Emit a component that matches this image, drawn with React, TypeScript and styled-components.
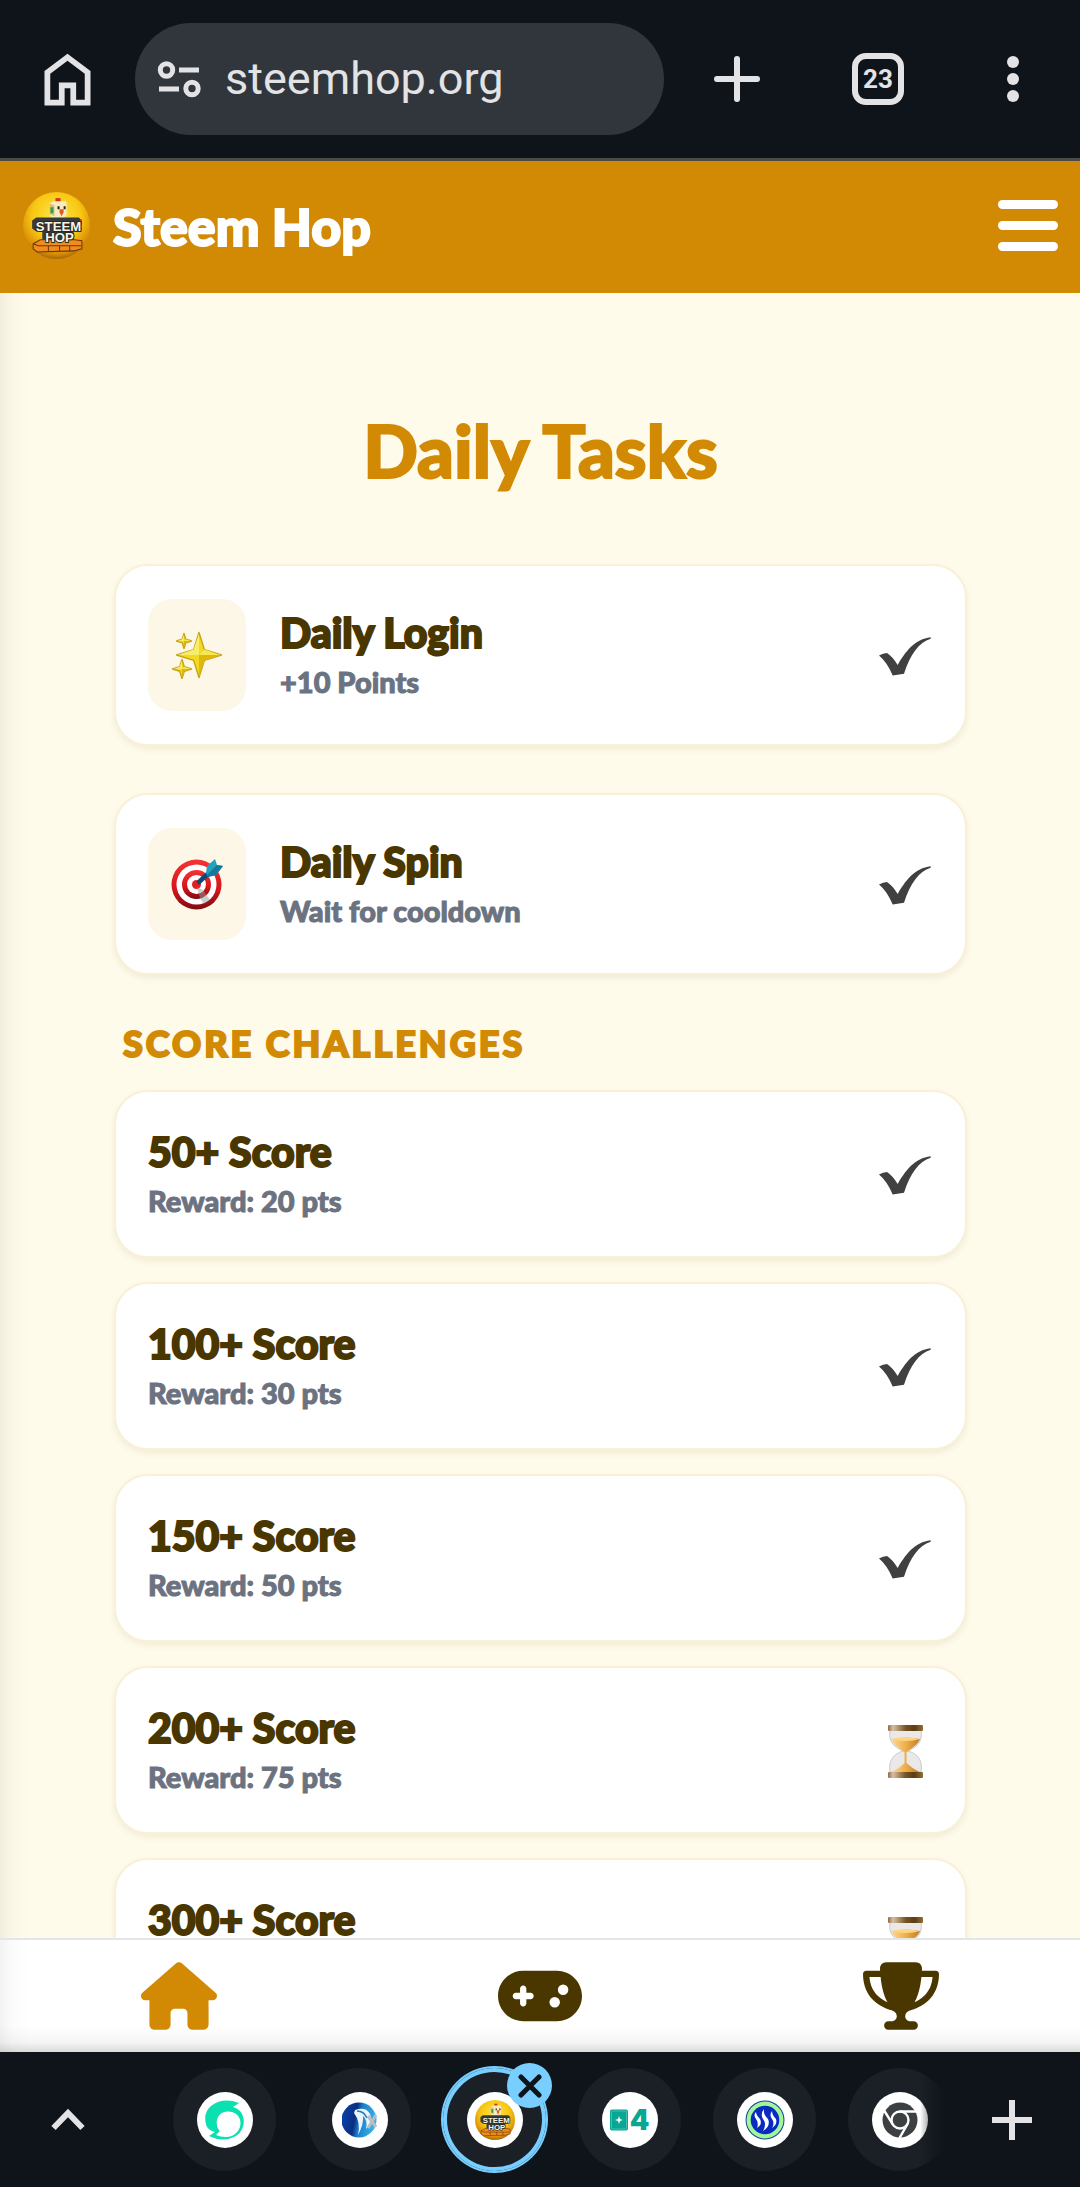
import React from "react";
import styled, { createGlobalStyle } from "styled-components";
import { FaHouse, FaGamepad, FaTrophy } from "react-icons/fa6";

const color = {
  chrome: "#0f141a",
  chromeIcon: "#e3e3e6",
  pill: "#30363c",
  gold: "#d28a04",
  brown: "#4a3700",
  cream: "#fffbea",
  grey: "#6b7280",
};

const GlobalStyle = createGlobalStyle`
  *, *::before, *::after { box-sizing: border-box; }
  body { margin: 0; background: ${color.chrome}; }
  button { border: 0; padding: 0; margin: 0; background: none; font: inherit; color: inherit; cursor: pointer; }
  a { color: inherit; text-decoration: none; }
  svg { display: block; flex: none; }
`;

const Screen = styled.div`
  display: flex;
  flex-direction: column;
  height: 100vh;
  font-family: Lato, "Open Sans", sans-serif;
  color: ${color.brown};
`;

/* Browser toolbar */

const Toolbar = styled.div`
  flex: none;
  display: flex;
  align-items: center;
  height: 161px;
  background: ${color.chrome};
  border-bottom: 3px solid #4b4a44;
  color: ${color.chromeIcon};
`;

const ToolButton = styled.button<{ $width: number }>`
  display: flex;
  align-items: center;
  justify-content: center;
  width: ${(p) => p.$width}px;
  height: 112px;
  flex: none;
`;

const AddressPill = styled.div`
  flex: 1;
  min-width: 0;
  display: flex;
  align-items: center;
  gap: 24px;
  height: 112px;
  padding: 0 22px;
  border-radius: 56px;
  background: ${color.pill};
`;

const AddressInput = styled.input`
  flex: 1;
  min-width: 0;
  border: 0;
  padding: 0;
  outline: 0;
  background: none;
  color: ${color.chromeIcon};
  font: 400 45px/60px Roboto, sans-serif;
`;

const TabCount = styled.span`
  display: flex;
  align-items: center;
  justify-content: center;
  width: 52px;
  height: 52px;
  border: 6px solid ${color.chromeIcon};
  border-radius: 14px;
  font: 700 26px/30px Roboto, sans-serif;
`;

/* Site header */

const Header = styled.header`
  flex: none;
  display: flex;
  align-items: center;
  justify-content: space-between;
  height: 132px;
  padding: 0 22px 3px 23px;
  background: ${color.gold};
  color: #fff;
`;

const Brand = styled.a`
  display: flex;
  align-items: center;
  gap: 23px;
  font-size: 52px;
  line-height: 60px;
  font-weight: 900;
  -webkit-text-stroke: 2px currentColor;

  svg {
    -webkit-text-stroke: 0;
  }
`;

const MenuButton = styled.button`
  display: flex;
  flex-direction: column;
  gap: 12px;
`;

const MenuBar = styled.span`
  width: 60px;
  height: 9px;
  border-radius: 5px;
  background: #fff;
`;

/* Task list */

const edgeShade = "linear-gradient(to right, rgba(0,0,0,0.05), rgba(0,0,0,0.015) 12px, transparent 30px)";

const Main = styled.main`
  flex: 1;
  min-height: 0;
  overflow-y: auto;
  scrollbar-width: none;
  padding: 111px 113px 0 114px;
  background: ${edgeShade}, ${color.cream};
`;

const PageTitle = styled.h1`
  margin: 0 0 68px;
  text-align: center;
  font-size: 72px;
  line-height: 92px;
  font-weight: 900;
  color: ${color.gold};
  -webkit-text-stroke: 2px currentColor;
`;

const TaskList = styled.ul<{ $gap: number }>`
  display: flex;
  flex-direction: column;
  gap: ${(p) => p.$gap}px;
  margin: 0;
  padding: 0;
  list-style: none;
`;

const TaskCard = styled.li`
  display: flex;
  align-items: center;
  gap: 34px;
  padding: 33px 34px 33px 32px;
  border: 2px solid #faf0d7;
  border-radius: 34px;
  background: #fff;
  box-shadow: 0 3px 6px rgba(80, 60, 0, 0.08);
`;

const TaskIcon = styled.div`
  flex: none;
  display: flex;
  align-items: center;
  justify-content: center;
  width: 98px;
  height: 112px;
  border-radius: 24px;
  background: #fdf7e7;
`;

const TaskText = styled.div`
  flex: 1;
  min-width: 0;
  min-height: 98px;
`;

const TaskTitle = styled.h3`
  margin: 0;
  font-size: 41px;
  line-height: 54px;
  font-weight: 900;
  -webkit-text-stroke: 2px currentColor;
`;

const TaskNote = styled.p`
  margin: 0;
  font-size: 29px;
  line-height: 44px;
  font-weight: 900;
  color: ${color.grey};
  -webkit-text-stroke: 1px currentColor;
`;

const SectionTitle = styled.h2`
  margin: 43px 0 22px;
  padding-left: 9px;
  font-size: 36px;
  line-height: 50px;
  font-weight: 900;
  letter-spacing: 3px;
  text-transform: uppercase;
  color: ${color.gold};
  -webkit-text-stroke: 2px currentColor;
`;

/* Site navigation */

const BottomNav = styled.nav`
  flex: none;
  display: flex;
  align-items: center;
  justify-content: space-around;
  height: 114px;
  padding-bottom: 1px;
  border-top: 2px solid #e5e5e8;
  background: linear-gradient(to top, rgba(0, 20, 0, 0.15), rgba(0, 0, 0, 0.04) 10px, transparent 26px), ${edgeShade}, #fff;
`;

const NavLink = styled.a<{ $width: number; $active?: boolean }>`
  display: flex;
  color: ${(p) => (p.$active ? color.gold : color.brown)};

  svg {
    height: 68px;
    width: ${(p) => p.$width}px;
  }
`;

/* Browser tab strip */

const TabStrip = styled.div`
  flex: none;
  display: flex;
  align-items: center;
  height: 135px;
  background: ${color.chrome};
  color: ${color.chromeIcon};
`;

const Tabs = styled.div`
  position: relative;
  flex: 1;
  min-width: 0;
  display: flex;
  align-items: center;
  gap: 32px;
  height: 135px;
  padding-left: 37px;
  overflow: hidden;

  &::after {
    content: "";
    position: absolute;
    inset: 0 0 0 auto;
    width: 24px;
    background: linear-gradient(to right, transparent, ${color.chrome});
  }
`;

const Tab = styled.div<{ $active?: boolean }>`
  position: relative;
  flex: none;
  display: flex;
  align-items: center;
  justify-content: center;
  width: 103px;
  height: 103px;
  border-radius: 50%;
  background: #1b1f26;
  box-shadow: ${(p) => (p.$active ? "inset 0 0 0 4px #77ceff, 0 0 0 2px #77ceff" : "none")};
`;

const Favicon = styled.button`
  display: flex;
  align-items: center;
  justify-content: center;
  width: 56px;
  height: 56px;
  border-radius: 50%;
  background: #fff;
`;

const CloseTab = styled.button`
  position: absolute;
  top: -5px;
  right: -6px;
  display: flex;
  align-items: center;
  justify-content: center;
  width: 45px;
  height: 45px;
  border-radius: 50%;
  background: #77ceff;
  color: ${color.chrome};
`;

/* Drawings */

const HomeOutline = () => (
  <svg width="69" height="69" viewBox="0 0 24 24" fill="currentColor">
    <path d="M6 19h3v-6h6v6h3v-9l-6-4.500L6 10v9Zm-2 2V9l8-6 8 6v12h-7v-6h-2v6H4Z" />
  </svg>
);

const SiteInfo = () => (
  <svg width="44" height="38" viewBox="0 0 44 38" fill="none" stroke="currentColor" strokeWidth="5">
    <circle cx="9.500" cy="10" r="6.200" />
    <path d="M22 10h20M2 29h20" />
    <circle cx="35" cy="28.500" r="6.200" />
  </svg>
);

const RoundPlus = () => (
  <svg width="46" height="46" viewBox="0 0 46 46" stroke="currentColor" strokeWidth="6" strokeLinecap="round">
    <path d="M23 3v40M3 23h40" />
  </svg>
);

const Dots = () => (
  <svg width="12" height="48" viewBox="0 0 12 48" fill="currentColor">
    <circle cx="6" cy="7" r="6" />
    <circle cx="6" cy="24" r="6" />
    <circle cx="6" cy="41" r="6" />
  </svg>
);

const GameLogo = ({ size, id }: { size: number; id: string }) => (
  <svg width={size} height={size} viewBox="0 0 66 66">
    <defs>
      <radialGradient id={id} cx="50%" cy="36%" r="66%">
        <stop offset="0" stopColor="#ffe648" />
        <stop offset="0.550" stopColor="#f8c713" />
        <stop offset="0.850" stopColor="#d98f08" />
        <stop offset="1" stopColor="#96600a" />
      </radialGradient>
    </defs>
    <circle cx="33" cy="33" r="33" fill={`url(#${id})`} />
    <path d="M32 6h5v5h-5z" fill="#d8321c" />
    <path d="M26 11l4-2h12l1 2v12l-3 2H28l-2-3z" fill="#f7ebc0" />
    <path d="M26 11l5 2v11l-5-2z" fill="#d9c27c" />
    <path d="M27 15h3v6h-3z" fill="#3f9a4c" />
    <path d="M34 14h2v3h-2zM40 14h2v3h-2z" fill="#222" />
    <path d="M36 17h4v3l-2 4-2-4z" fill="#e4581a" />
    <path d="M9 28l4-3h42l3 3v9l-4 2h-4v9H19v-9h-6l-4-3z" fill="#3b3a36" />
    <path d="M56 27h2v4h-2z" fill="#d33a22" />
    <path d="M56 32h2v4h-2z" fill="#4fae3b" />
    <path d="M10 51l7-4h34l7 1v8l-8 2-36 1-4-3z" fill="#f08c1c" stroke="#6b3606" strokeWidth="1" />
    <path d="M10 51l5 2h42M25 53v5M36 53v5M46 53v5" fill="none" stroke="#6b3606" strokeWidth="1" />
    <g
      fill="#f6f4ea"
      stroke="#2a2924"
      strokeWidth="2"
      strokeLinejoin="round"
      paintOrder="stroke"
      textAnchor="middle"
      fontFamily="'Liberation Sans', sans-serif"
      fontWeight="700"
    >
      <text x="35" y="38" fontSize="13">STEEM</text>
      <text x="36" y="49" fontSize="13">HOP</text>
    </g>
  </svg>
);

const Star = ({ x, y, r }: { x: number; y: number; r: number }) => {
  const k = r * 0.24;
  const points = [
    [0, -r], [k, -k], [r, 0], [k, k], [0, r], [-k, k], [-r, 0], [-k, -k],
  ];
  return (
    <g transform={`translate(${x} ${y})`} strokeLinejoin="round">
      <polygon points={points.map((p) => p.join(",")).join(" ")} fill="#f3d91f" stroke="#c9a21b" strokeWidth="1.400" />
      <path d={`M0 0L0 ${-r + 1}L${-k} ${-k}L${-r + 1} 0Z`} fill="#f8ec6c" />
      <path d={`M0 0L${k} ${-k}L${r - 1} 0Z`} fill="#f6e650" />
      <path d={`M0 0L0 ${r - 1}L${k} ${k}L${r - 1} 0Z`} fill="#dfb80c" />
    </g>
  );
};

const Sparkles = () => (
  <svg width="52" height="48" viewBox="0 0 52 48">
    <Star x={28} y={24} r={22.500} />
    <Star x={13} y={10} r={7.500} />
    <Star x={11} y={38} r={9.500} />
  </svg>
);

const Target = () => (
  <svg width="52" height="52" viewBox="0 0 52 52">
    <defs>
      <linearGradient id="target-red" x1="0" y1="0" x2="0" y2="1">
        <stop offset="0" stopColor="#f33434" />
        <stop offset="0.600" stopColor="#d5151a" />
        <stop offset="1" stopColor="#7c0c12" />
      </linearGradient>
    </defs>
    <circle cx="25.500" cy="26.500" r="25" fill="url(#target-red)" />
    <circle cx="25.500" cy="26.500" r="20" fill="#fff" />
    <circle cx="25.500" cy="26.500" r="14.500" fill="url(#target-red)" />
    <circle cx="25.500" cy="26.500" r="9.500" fill="#fff" />
    <circle cx="25.500" cy="26.500" r="4.500" fill="#e31f24" />
    <path d="M26 29l6 3 7 10-6 4-4-6z" fill="#9c9c9c" opacity="0.500" />
    <path d="M28 24L41 12" stroke="#0d4b77" strokeWidth="4.500" strokeLinecap="round" />
    <path d="M35 15l1-7 8-7 2 6 6 1-7 9-8 2z" fill="#22a3bd" />
    <path d="M36 17L46 7l6 1-7 9-8 2z" fill="#137a9c" />
  </svg>
);

const Check = () => (
  <svg width="52" height="44" viewBox="0 -4 52 44" role="img" aria-label="Done">
    <path
      d="M0 18.500Q4 16 8 16Q13 19 18.700 28C26 15 36 2 51.700 0.300V1.800C40 5 31 18 25 36.700L13.700 38.500Q8 25 0 18.500Z"
      fill="#404040"
    />
  </svg>
);

const Hourglass = ({ id }: { id: string }) => (
  <svg width="52" height="58" viewBox="-9 -3 52 58" role="img" aria-label="Pending">
    <defs>
      <linearGradient id={`${id}-wood`} x1="0" x2="1" y1="0" y2="0">
        <stop offset="0" stopColor="#8d6a48" />
        <stop offset="0.140" stopColor="#d8c0a4" />
        <stop offset="0.500" stopColor="#7a5524" />
        <stop offset="0.750" stopColor="#5b3d10" />
        <stop offset="1" stopColor="#8e6e38" />
      </linearGradient>
      <linearGradient id={`${id}-sand`} x1="0" x2="1" y1="0" y2="0">
        <stop offset="0" stopColor="#ffd994" />
        <stop offset="0.500" stopColor="#eeb04d" />
        <stop offset="1" stopColor="#c27f1f" />
      </linearGradient>
    </defs>
    <path
      d="M2 6h31C35 19 28 23 20 27C30 30 35 36 33 48H2C0 36 6 30 15 27C7 23 0 19 2 6Z"
      fill="#eae8e8"
      stroke="#cdcaca"
      strokeWidth="1"
    />
    <path d="M3 15q14-3 29 0C30 21 23 24 19 28H16C12 24 5 21 3 15Z" fill={`url(#${id}-sand)`} />
    <path d="M3 15q14-3 29 0q-14 4-29 0Z" fill="#ffd47e" />
    <path d="M16.500 27h2v12q5 5 13 9H3q9-4 13.500-9Z" fill={`url(#${id}-sand)`} />
    <rect x="0" y="1" width="35" height="6" rx="1" fill={`url(#${id}-wood)`} />
    <rect x="0" y="48" width="35" height="6" rx="1" fill={`url(#${id}-wood)`} />
  </svg>
);

const Chevron = () => (
  <svg width="34" height="24" viewBox="0 0 34 24" fill="none" stroke="currentColor" strokeWidth="6">
    <path d="M2.500 20L17 5l14.500 15" />
  </svg>
);

const SquarePlus = () => (
  <svg width="40" height="40" viewBox="0 0 40 40" stroke="currentColor" strokeWidth="6">
    <path d="M20 0v40M0 20h40" />
  </svg>
);

const Cross = () => (
  <svg width="24" height="24" viewBox="0 0 24 24" stroke="currentColor" strokeWidth="5" strokeLinecap="round">
    <path d="M3 3l18 18M21 3L3 21" />
  </svg>
);

const GreenSwirl = () => (
  <svg width="40" height="40" viewBox="0 0 40 40">
    <path
      d="M34 3Q18-3 6 6C-2 13 0 22 2 27Q5 31 10 32L4 36Q18 43 31 36C40 30 41 18 35 11Q32 8 28 7ZM23 11.500C31 11.500 35.500 17 35.500 23C35.500 31 29 37 21 37Q15 37 11 35L15 31C9 25 11 11.500 23 11.500Z"
      fill="#0be0b0"
      fillRule="evenodd"
    />
    <circle cx="23.500" cy="23.500" r="11.500" fill="#fff" />
  </svg>
);

const BlueDisc = () => (
  <svg width="36" height="36" viewBox="0 0 36 36">
    <defs>
      <linearGradient id="disc-blue" x1="0" x2="1" y1="0" y2="0.200">
        <stop offset="0" stopColor="#0b45b4" />
        <stop offset="0.450" stopColor="#0a2f80" />
        <stop offset="0.600" stopColor="#1c7cc8" />
        <stop offset="1" stopColor="#35b2ea" />
      </linearGradient>
    </defs>
    <circle cx="17" cy="18" r="17.500" fill="url(#disc-blue)" />
    <path d="M13 8Q24 4 28 12Q32 20 24 27Q26 18 21 14Q22 22 16 33Q19 20 12 11Z" fill="#e9f4fb" />
    <path d="M15 9Q22 9 25 16" stroke="#1d79c4" strokeWidth="1.500" fill="none" />
    <path d="M26 14l8 11M34 13l-8 13" stroke="#b9bdc4" strokeWidth="3" />
  </svg>
);

const GreenFour = () => (
  <svg width="40" height="22" viewBox="0 0 40 22" fill="#08a693">
    <rect x="0" y="0.500" width="18" height="21" rx="2" />
    <rect x="1.500" y="2" width="15" height="18" rx="1" fill="none" stroke="#6fd0c4" strokeWidth="0.600" />
    <path d="M9 7l1 3 3 1-3 1-1 3-1-3-3-1 3-1z" fill="#fff" />
    <text x="29.500" y="21" fontSize="28" fontWeight="900" textAnchor="middle" fontFamily="Inter, sans-serif">4</text>
  </svg>
);

const SteemBadge = () => (
  <svg width="40" height="40" viewBox="0 0 40 40">
    <circle cx="20" cy="20" r="19.500" fill="#1c3f9a" />
    <circle cx="20" cy="20" r="18.500" fill="#9ff79a" />
    <circle cx="20" cy="20" r="14.300" fill="#0a2bc0" />
    <g fill="#fff">
      <path d="M11 12Q8 15 11 19Q14 23 12 28Q18 24 15 19Q11 15 11 12Z" />
      <path d="M19 9Q15 14 18 19Q22 24 18 31Q26 26 23 19Q18 14 19 9Z" />
      <path d="M27 11Q24 15 27 19Q30 23 27 28Q33 24 31 19Q27 15 27 11Z" />
    </g>
  </svg>
);

const ChromeMono = () => (
  <svg width="36" height="36" viewBox="0 0 36 36">
    <circle cx="18" cy="18" r="17.500" fill="#3c4043" />
    <g stroke="#fff" strokeWidth="2.400" fill="none">
      <circle cx="18" cy="18" r="8.500" />
      <path d="M18 9.500h17M10.600 22.200L2.500 9M25.400 22.200L17.500 36" />
    </g>
  </svg>
);

/* Page */

const dailyTasks = [
  { title: "Daily Login", note: "+10 Points", icon: <Sparkles /> },
  { title: "Daily Spin", note: "Wait for cooldown", icon: <Target /> },
];

const challenges: { score: number; reward?: number; done: boolean }[] = [
  { score: 50, reward: 20, done: true },
  { score: 100, reward: 30, done: true },
  { score: 150, reward: 50, done: true },
  { score: 200, reward: 75, done: false },
  { score: 300, done: false },
];

const tabs = [
  { name: "Steemit", icon: <GreenSwirl /> },
  { name: "SteemX", icon: <BlueDisc /> },
  { name: "Steem Hop", icon: <GameLogo size={40} id="logo-tab" />, active: true },
  { name: "Game 4", icon: <GreenFour /> },
  { name: "Steem", icon: <SteemBadge /> },
  { name: "Chrome", icon: <ChromeMono /> },
];

export default function App() {
  return (
    <Screen>
      <GlobalStyle />
      <Toolbar>
        <ToolButton $width={135} aria-label="Home"><HomeOutline /></ToolButton>
        <AddressPill>
          <SiteInfo />
          <AddressInput aria-label="Address" defaultValue="steemhop.org" />
        </AddressPill>
        <ToolButton $width={146} aria-label="New tab"><RoundPlus /></ToolButton>
        <ToolButton $width={136} aria-label="Open tabs"><TabCount>23</TabCount></ToolButton>
        <ToolButton $width={134} aria-label="More"><Dots /></ToolButton>
      </Toolbar>

      <Header>
        <Brand href="#home">
          <GameLogo size={67} id="logo-header" />
          Steem Hop
        </Brand>
        <MenuButton aria-label="Menu">
          <MenuBar />
          <MenuBar />
          <MenuBar />
        </MenuButton>
      </Header>

      <Main>
        <PageTitle>Daily Tasks</PageTitle>
        <TaskList $gap={47}>
          {dailyTasks.map((task) => (
            <TaskCard key={task.title}>
              <TaskIcon>{task.icon}</TaskIcon>
              <TaskText>
                <TaskTitle>{task.title}</TaskTitle>
                <TaskNote>{task.note}</TaskNote>
              </TaskText>
              <Check />
            </TaskCard>
          ))}
        </TaskList>
        <SectionTitle>Score Challenges</SectionTitle>
        <TaskList $gap={24}>
          {challenges.map((item) => (
            <TaskCard key={item.score}>
              <TaskText>
                <TaskTitle>{item.score}+ Score</TaskTitle>
                {item.reward && <TaskNote>Reward: {item.reward} pts</TaskNote>}
              </TaskText>
              {item.done ? <Check /> : <Hourglass id={`glass-${item.score}`} />}
            </TaskCard>
          ))}
        </TaskList>
      </Main>

      <BottomNav>
        <NavLink href="#home" $width={76} $active aria-label="Home"><FaHouse /></NavLink>
        <NavLink href="#play" $width={84} aria-label="Play"><FaGamepad /></NavLink>
        <NavLink href="#ranking" $width={76} aria-label="Ranking"><FaTrophy /></NavLink>
      </BottomNav>

      <TabStrip>
        <ToolButton $width={136} aria-label="Expand tabs"><Chevron /></ToolButton>
        <Tabs>
          {tabs.map((tab) => (
            <Tab key={tab.name} $active={tab.active}>
              <Favicon aria-label={tab.name}>{tab.icon}</Favicon>
              {tab.active && <CloseTab aria-label="Close tab"><Cross /></CloseTab>}
            </Tab>
          ))}
        </Tabs>
        <ToolButton $width={136} aria-label="New tab in group"><SquarePlus /></ToolButton>
      </TabStrip>
    </Screen>
  );
}
